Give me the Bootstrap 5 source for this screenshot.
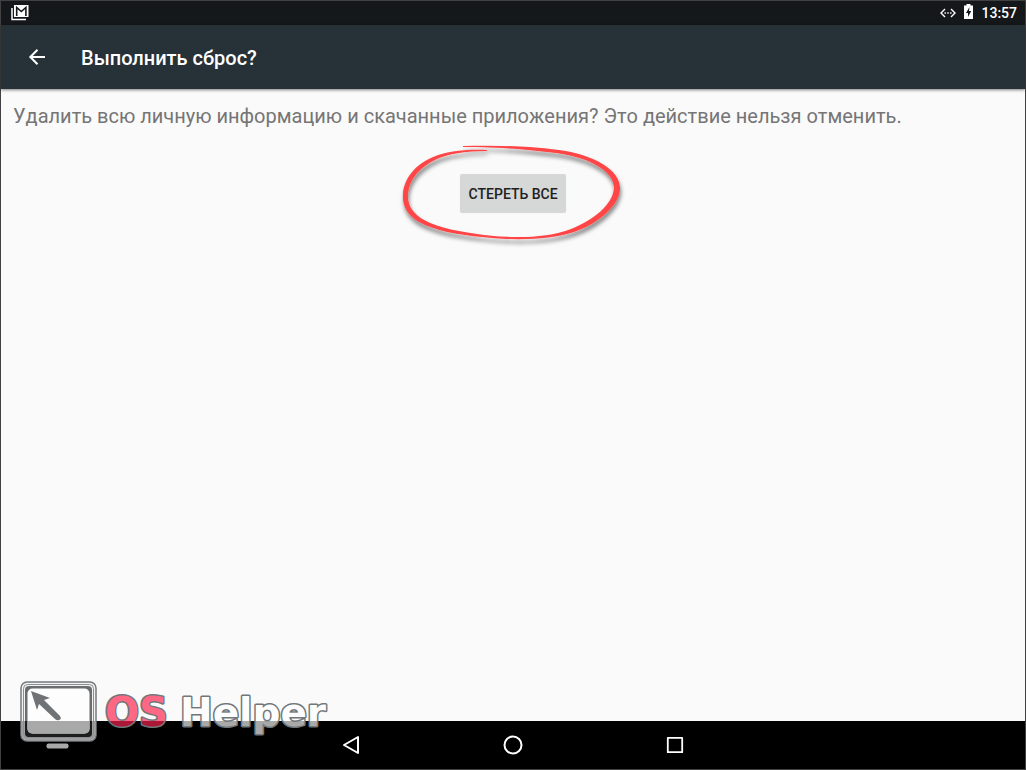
<!DOCTYPE html>
<html lang="ru">
<head>
<meta charset="utf-8">
<meta name="viewport" content="width=device-width, initial-scale=1">
<title>Выполнить сброс?</title>
<link href="https://cdn.jsdelivr.net/npm/bootstrap@5.3.0/dist/css/bootstrap.min.css" rel="stylesheet">
<style>
  body { font-family: Roboto, sans-serif; background: #fafafa; }
  .device { min-height: 100vh; border: 1px solid #414141; }
  .status-bar { height: 24px; background: #14181a; color: #fff; padding: 0 8px 0 10px; }
  .clock { font-size: 14px; line-height: 24px; font-weight: 500; }
  .app-bar { height: 64px; background: #263238; color: #fff; padding: 0 24px; box-shadow: 0 1px 3px rgba(0,0,0,.5); gap: 32px; z-index: 1; }
  .app-title { font-size: 20px; line-height: 28px; font-weight: 500; padding-top: 2px; }
  .message { font-size: 20px; line-height: 28px; color: #757575; font-kerning: none; }
  .content { padding: 13px 12px; }
  .erase-wrap { margin-top: 44px; }
  .btn-erase { --bs-btn-bg: #d6d7d7; --bs-btn-color: #212121; --bs-btn-hover-bg: #c8c9c9; --bs-btn-hover-color: #212121;
    --bs-btn-border-width: 0; --bs-btn-border-radius: 2px; --bs-btn-padding-x: 8px;
    font-size: 14px; line-height: 18px; font-weight: 500; padding-top: 11px; padding-bottom: 9px; font-kerning: none; box-shadow: 0 1px 1px rgba(0,0,0,.15); }
  .marker { left: 50%; top: 50%; transform: translate(-50%, -50%); pointer-events: none; }
  .nav-keys { height: 48px; background: #000; gap: 138px; }
  .brand-mark { left: 18px; bottom: 17px; z-index: 2; pointer-events: none; }
  .brand-mark text { font-family: "DejaVu Sans", sans-serif; font-weight: 700; stroke: #70777b; stroke-width: 3px; stroke-linejoin: round; paint-order: stroke; }
</style>
</head>
<body>
<div class="device d-flex flex-column position-relative">
  <header class="status-bar d-flex align-items-center justify-content-between">
    <svg width="18" height="16" viewBox="0 0 18 16" aria-hidden="true">
      <path d="M1 3v11.500h14" fill="none" stroke="#fff" stroke-width="1.500"/>
      <path d="M3 0h14.500v12H3z" fill="#fff"/>
      <path d="M5.700 11V2.500l4.600 4 4.600-4V11" fill="none" stroke="#14181a" stroke-width="1.600"/>
    </svg>
    <div class="d-flex align-items-center">
      <svg width="16" height="10" viewBox="0 0 16 10" fill="none" stroke="#fff" stroke-width="1.400" aria-hidden="true">
        <path d="M5 1 1 5l4 4M11 1l4 4-4 4"/><path d="M4.500 5h1.400m1.400 0h1.400m1.400 0h1.400"/>
      </svg>
      <svg class="ms-2" width="9" height="18" viewBox="0 0 9 18" aria-hidden="true">
        <path d="M2.500 0h4v1.500H9V15H0V1.500h2.500z" fill="#fff"/><path d="M5.500 3 2 9h2v4l3.200-6H5z" fill="#14181a"/>
      </svg>
      <span class="clock ms-2">13:57</span>
    </div>
  </header>
  <div class="app-bar d-flex align-items-center">
    <button type="button" class="btn p-0 border-0 d-flex" aria-label="Назад">
      <svg width="24" height="24" viewBox="0 0 24 24" fill="none" stroke="#fff" stroke-width="2"><path d="M20 12H5.500M12.500 4.700 5.300 12l7.200 7.300"/></svg>
    </button>
    <h1 class="app-title m-0">Выполнить сброс?</h1>
  </div>
  <main class="content flex-grow-1">
    <p class="message m-0">Удалить всю личную информацию и скачанные приложения? Это действие нельзя отменить.</p>
    <div class="erase-wrap position-relative d-flex justify-content-center">
      <button type="button" class="btn btn-erase">СТЕРЕТЬ ВСЕ</button>
      <svg class="marker position-absolute" width="246" height="120" viewBox="0 0 246 120" aria-hidden="true">
        <defs><filter id="soft" x="-10%" y="-10%" width="120%" height="130%"><feDropShadow dx="1" dy="4" stdDeviation="2" flood-color="#000" flood-opacity=".5"/></filter></defs>
        <path filter="url(#soft)" fill="#ff4444" d="M73 13C105 12 137 13 169 17C205 22 230 37 230 55C230 72 208 91 184 99C158 108 118 107 92 104C70 102 45 98 29 89C17 82 12 72 13 61C14 45 26 31 43 24C57 18 76 16 97 17L97 18C74 18 58 21 47 26C29 34 19 47 18 61C17 72 23 81 34 87C48 95 72 99 94 102C120 105 156 106 181 96C204 87 223 71 224 55C224 39 202 25 166 20C136 16 104 14 73 14Z"/>
      </svg>
    </div>
  </main>
  <nav class="nav-keys d-flex align-items-center justify-content-center" aria-label="Системная навигация">
    <button type="button" class="btn p-0 border-0 d-flex" aria-label="Назад"><svg width="24" height="24" viewBox="0 0 24 24" fill="none" stroke="#fff" stroke-width="2" stroke-linejoin="round"><path d="M19 4v16L5 12z"/></svg></button>
    <button type="button" class="btn p-0 border-0 d-flex" aria-label="Домой"><svg width="24" height="24" viewBox="0 0 24 24" fill="none" stroke="#fff" stroke-width="2"><circle cx="12" cy="12" r="8.500"/></svg></button>
    <button type="button" class="btn p-0 border-0 d-flex" aria-label="Обзор"><svg width="24" height="24" viewBox="0 0 24 24" fill="none" stroke="#fff" stroke-width="1.800" stroke-linejoin="round"><path d="M4.800 4.800h14.400v14.400H4.800z"/></svg></button>
  </nav>
  <div class="brand-mark position-absolute">
    <svg class="d-block" width="314" height="74" viewBox="0 0 314 74" role="img" aria-label="OS Helper">
      <rect x="2" y="4" width="75" height="59" rx="6" fill="#f2f2f2" stroke="#75797c" stroke-width="1.500"/>
      <path d="M2.700 43h73.600v14q0 5-5 5H7.700q-5 0-5-5z" fill="#a0a0a0"/>
      <rect x="4.500" y="6.500" width="70" height="53" rx="4" fill="none" stroke="#8b8f91"/>
      <rect x="6" y="8" width="67" height="51" rx="4" fill="#6a6d6f"/>
      <path d="M6 43h67v12q0 4-4 4H10q-4 0-4-4z" fill="#1c1e1f"/>
      <rect x="8.500" y="10.500" width="62" height="45" rx="5" fill="#fdfdfd"/>
      <path d="M8.500 43h62v7.500q0 5-5 5h-52q-5 0-5-5z" fill="#a9a9a9"/>
      <path d="M12 13 31 20l-6 2 16 16q2 3-1 4-2 1-4-1L20 26l-2 6z" fill="#707376"/>
      <rect x="27.500" y="65.500" width="22" height="5" rx="2" fill="#a9a9a9"/>
      <defs>
        <linearGradient id="os" gradientUnits="userSpaceOnUse" x1="0" y1="0" x2="0" y2="74"><stop offset=".58" stop-color="#ff6885"/><stop offset=".58" stop-color="#aa1737"/></linearGradient>
        <linearGradient id="helper" gradientUnits="userSpaceOnUse" x1="0" y1="0" x2="0" y2="74"><stop offset=".58" stop-color="#fdfdfd"/><stop offset=".58" stop-color="#a9a9a9"/></linearGradient>
      </defs>
      <text x="86" y="48" font-size="40" fill="url(#os)">OS</text>
      <text x="161" y="48" font-size="39" fill="url(#helper)">Helper</text>
    </svg>
  </div>
</div>
<script src="https://cdn.jsdelivr.net/npm/bootstrap@5.3.0/dist/js/bootstrap.bundle.min.js"></script>
</body>
</html>
